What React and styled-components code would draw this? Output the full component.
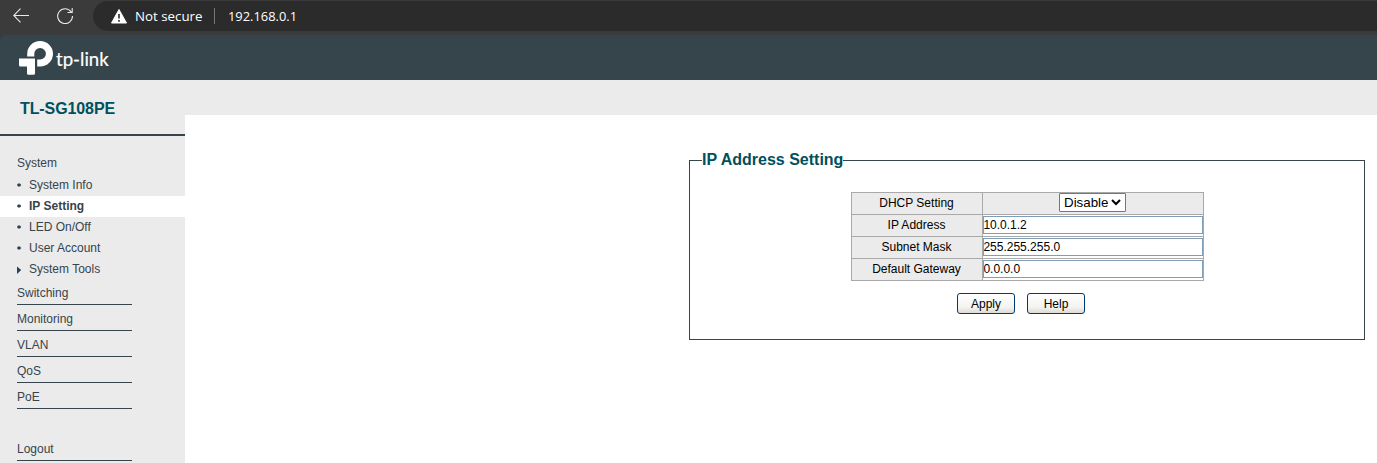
import React from "react";
import styled, { createGlobalStyle } from "styled-components";

const Global = createGlobalStyle`
  * { box-sizing: border-box; }
  body { margin: 0; background: #fff; overflow: hidden; font: 12px "Liberation Sans", Arial, sans-serif; }
`;
const Page = styled.div`
  display: flex;
  flex-direction: column;
  height: 463px;
  background: #fff;
`;
const BrowserBar = styled.div`
  display: flex;
  height: 35px;
  flex: none;
  padding: 1px 0 4px 13px;
  background: #3b3b3b;
  svg { flex: none; }
`;
const NavIcon = styled.svg`
  width: 16px;
  height: 16px;
  margin: 7px ${(p) => p.$gap}px 0 0;
  fill: none;
  stroke: #e8e8e8;
  stroke-width: 1.1;
`;
const AddressBar = styled.div`
  display: flex;
  flex: 1;
  align-items: center;
  height: 30px;
  padding-left: 18px;
  border-radius: 15px 0 0 15px;
  background: #2b2b2b;
  color: #fff;
  font: 14px "Open Sans", "Noto Sans", sans-serif;
`;
const Secure = styled.span`
  width: 67px;
  margin-left: 8px;
  white-space: nowrap;
  font-size: 13.3px;
`;
const Divider = styled.i`
  width: 1px;
  height: 16px;
  margin: 0 13px 0 12px;
  background: #777;
`;
const Url = styled.span`
  font-size: 12.9px;
`;
const Header = styled.header`
  height: 45px;
  flex: none;
  background: #36444b;
  border-radius: 6px 0 0 0;
  padding: 5px 0 0 19px;
`;
const HeaderBack = styled.div`
  background: #3b3b3b;
  flex: none;
`;
const Brand = styled.div`
  display: flex;
  color: #fff;
  svg { display: block; flex: none; }
`;
const BrandName = styled.span`
  margin: 7px 0 0 2px;
  font: 18.6px/24px Lato, sans-serif;
  -webkit-text-stroke: 0.2px #fff;
`;
const Body = styled.div`
  display: flex;
  flex: 1;
  min-height: 0;
`;
const Sidebar = styled.aside`
  width: 185px;
  flex: none;
  background: #ebebeb;
  color: #36444b;
`;
const Model = styled.div`
  height: 56px;
  padding: 19px 0 0 20px;
  border-bottom: 2px solid #36444b;
  color: #00505d;
  font-size: 16px;
  font-weight: bold;
  letter-spacing: -0.1px;
  line-height: 19px;
`;
const Menu = styled.nav`
  padding-top: 16px;
`;
const Group = styled.div`
  height: 23px;
  padding-left: 17px;
  line-height: 22px;
`;
const Item = styled.div`
  display: flex;
  align-items: center;
  height: 21px;
  padding-left: 17px;
  background: ${(p) => (p.$active ? "#fff" : "transparent")};
  font-weight: ${(p) => (p.$active ? "bold" : "normal")};
  line-height: 21px;
`;
const Marker = styled.svg`
  width: 5px;
  height: 8px;
  margin: ${(p) => (p.$low ? "1px 7px 0 0" : "0 7px 2px 0")};
  fill: #2f4150;
`;
const Sections = styled.div`
  margin: -1px 0 0 17px;
`;
const Section = styled.div`
  width: 115px;
  height: 26px;
  margin-top: ${(p) => p.$top || 0}px;
  border-bottom: 1px solid #36444b;
  line-height: 29px;
`;
const Main = styled.main`
  flex: 1;
  border-top: 35px solid #ebebeb;
  padding: 35px 12px 0 504px;
`;
const Panel = styled.fieldset`
  height: 190px;
  margin: 0;
  padding: 0 0 0 12px;
  border: 1px solid #36444b;
  min-width: 0;
`;
const Legend = styled.legend`
  padding: 0 0 2px;
  color: #00505d;
  font-size: 16px;
  font-weight: bold;
  line-height: 19px;
`;
const Form = styled.div`
  display: flex;
  flex-direction: column;
  align-items: center;
  padding: 21px 11px 0 0;
`;
const Table = styled.div`
  width: 353px;
  border: 1px solid #a9a9a9;
  border-bottom: 0;
`;
const Row = styled.div`
  display: grid;
  grid-template-columns: 131px 1fr;
  height: 22px;
  border-bottom: 1px solid #a9a9a9;
`;
const Label = styled.div`
  padding-right: 1px;
  background: #ebebeb;
  border-right: 1px solid #a9a9a9;
  text-align: center;
  line-height: 20px;
`;
const Cell = styled.div`
  display: flex;
  justify-content: center;
  align-items: flex-start;
  padding: ${(p) => (p.$shaded ? "0 1px 0 0" : "1px 0 0")};
  background: ${(p) => (p.$shaded ? "#ebebeb" : "#fff")};
`;
const Input = styled.input`
  width: 100%;
  height: 18px;
  padding: 0;
  border: 1px solid #7f9db9;
  font: 12px/14px "Liberation Sans", Arial, sans-serif;
  text-indent: -0.6px;
  outline: 0;
  color: #000;
`;
const Select = styled.button`
  display: flex;
  align-items: center;
  justify-content: space-between;
  width: 67px;
  height: 19px;
  padding: 0 4px;
  border: 1px solid #767676;
  border-radius: 1px;
  background: #fff;
  color: #000;
  font: 13.333px "Liberation Sans", Arial, sans-serif;
`;
const Buttons = styled.div`
  display: flex;
  gap: 12px;
  margin: 12px 0 0 -13px;
`;
const Button = styled.button`
  width: 58px;
  height: 21px;
  padding: 0;
  border: 1px solid #003c74;
  border-radius: 3px;
  background: linear-gradient(#fff, #f3f3f0 70%, #dcdad2);
  color: #000;
  font: 12px "Liberation Sans", Arial, sans-serif;
`;

const items = ["System Info", "IP Setting", "LED On/Off", "User Account", "System Tools"];
const sections = ["Switching", "Monitoring", "VLAN", "QoS", "PoE"];
const fields = [["IP Address", "10.0.1.2"], ["Subnet Mask", "255.255.255.0"], ["Default Gateway", "0.0.0.0"]];

export default function App() {
  return (
    <Page>
      <Global />
      <BrowserBar>
        <NavIcon viewBox="0 0 16 16" $gap={28}><path d="M16 7.5H.7M7.5.7.7 7.5l6.8 6.8" /></NavIcon>
        <NavIcon viewBox="0 0 16 16" $gap={20}><path d="M14.2 4A7.4 7.4 0 1 0 15.5 8M15.2 0v4.5H10.5" /></NavIcon>
        <AddressBar>
          <svg width="16" height="15" viewBox="0 0 16 15"><path d="M8 .5 15.5 14H.5Z" fill="#fff" stroke="#fff" strokeLinejoin="round" /><path d="M8 5v4.5M8 11v1.8" stroke="#2b2b2b" strokeWidth="1.6" /></svg>
          <Secure>Not secure</Secure>
          <Divider />
          <Url>192.168.0.1</Url>
        </AddressBar>
      </BrowserBar>
      <HeaderBack>
        <Header>
          <Brand>
            <svg width="35" height="35" viewBox="0 0 35 35" fill="#fff">
              <path d="M8.2 16.5V13.8A12.9 12.8 0 1 1 21.1 26.6H18.2V19.4H21.1A5.8 5.7 0 1 0 15.3 13.8V16.5Z" />
              <path d="M0 18.6h16v14.7q0 1.5-1.5 1.5H9.5Q8 34.8 8 33.3V26.4H1.5Q0 26.4 0 24.9Z" />
            </svg>
            <BrandName>tp-link</BrandName>
          </Brand>
        </Header>
      </HeaderBack>
      <Body>
        <Sidebar>
          <Model>TL-SG108PE</Model>
          <Menu>
            <Group>System</Group>
            {items.map((t, i) => (
              <Item key={t} $active={i === 1}>
                <Marker viewBox="0 0 5 8" $low={i === 4}>
                  {i === 4 ? <path d="M0 0.5 4.2 4 0 8Z" /> : <path d="M1 2.5h2L4.2 4 3 5.5H1L0 4Z" />}
                </Marker>
                {t}
              </Item>
            ))}
            <Sections>
              {sections.map((t) => <Section key={t}>{t}</Section>)}
              <Section $top={26}>Logout</Section>
            </Sections>
          </Menu>
        </Sidebar>
        <Main>
          <Panel>
            <Legend>IP Address Setting</Legend>
            <Form>
              <Table>
                <Row>
                  <Label>DHCP Setting</Label>
                  <Cell $shaded>
                    <Select>Disable<svg width="10" height="7" viewBox="0 0 10 7" fill="none" stroke="#000" strokeWidth="2"><path d="m1 1 4 4 4-4" /></svg></Select>
                  </Cell>
                </Row>
                {fields.map(([k, v]) => (
                  <Row key={k}><Label>{k}</Label><Cell><Input defaultValue={v} /></Cell></Row>
                ))}
              </Table>
              <Buttons><Button>Apply</Button><Button>Help</Button></Buttons>
            </Form>
          </Panel>
        </Main>
      </Body>
    </Page>
  );
}
